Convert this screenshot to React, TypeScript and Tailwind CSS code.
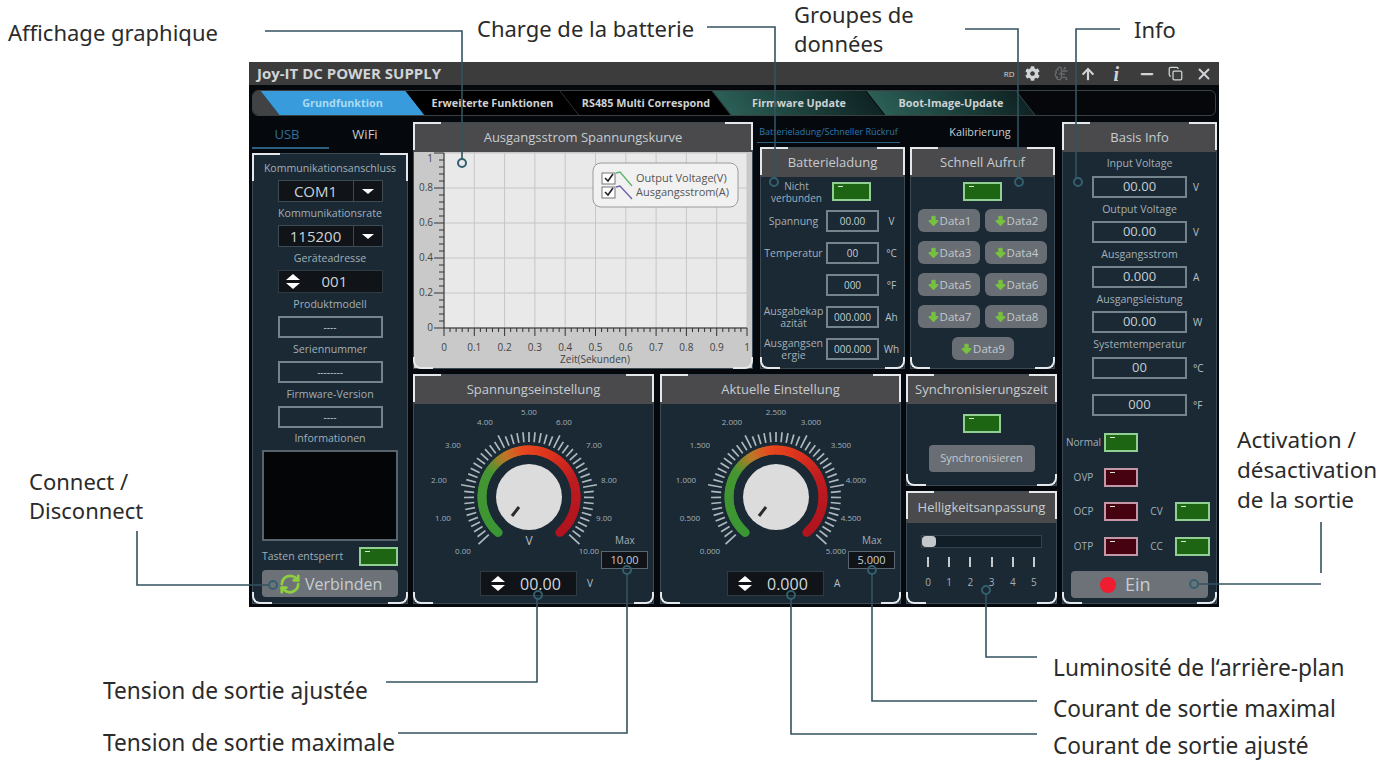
import type { ReactNode } from 'react';
import { ArrowBigDown, BrainCircuit, Copy, Minus, RefreshCw, X } from 'lucide-react';
import { FaArrowUp, FaCog } from 'react-icons/fa';

const ARC_STOPS: [number, number[]][] = [
  [-139, [58, 150, 52]],
  [-55, [70, 150, 50]],
  [-28, [190, 120, 40]],
  [-5, [232, 72, 30]],
  [30, [220, 50, 30]],
  [70, [190, 28, 32]],
  [139, [176, 20, 30]],
];

function arcColor(a: number) {
  for (let i = 1; i < ARC_STOPS.length; i++) {
    const [a0, c0] = ARC_STOPS[i - 1];
    const [a1, c1] = ARC_STOPS[i];
    if (a <= a1) {
      const t = (a - a0) / (a1 - a0);
      const c = c0.map((v, k) => Math.round(v + (c1[k] - v) * t));
      return `rgb(${c[0]},${c[1]},${c[2]})`;
    }
  }
  return 'rgb(176,20,30)';
}

function polar(r: number, deg: number, cx = 115, cy = 93) {
  const rad = (deg * Math.PI) / 180;
  return [cx + r * Math.sin(rad), cy - r * Math.cos(rad)];
}

const LABEL_POS = [
  [49, 150],
  [29, 117],
  [25, 79],
  [39, 44],
  [71, 21],
  [115, 11],
  [150, 21],
  [180, 44],
  [195, 79],
  [190, 117],
  [175, 150],
];

function Corners() {
  const c = 'absolute border-[#e4e8ea] pointer-events-none';
  return (
    <>
      <span className={`${c} -left-px -top-px w-7 h-7 border-l-2 border-t-2`} />
      <span className={`${c} -right-px -top-px w-7 h-7 border-r-2 border-t-2`} />
      <span className={`${c} -left-px -bottom-px w-5 h-3 border-l-2 border-b-2 rounded-bl-lg`} />
      <span className={`${c} -right-px -bottom-px w-5 h-3 border-r-2 border-b-2 rounded-br-lg`} />
    </>
  );
}

function Panel({ title, className, headH = 'h-[29px]', children }: { title?: string; className: string; headH?: string; children: ReactNode }) {
  return (
    <div className={`relative flex flex-col bg-[#1a2934] border border-[#3b4a55] ${className}`}>
      {title && (
        <div className={`${headH} shrink-0 flex items-center justify-center bg-[#4a4a4c] text-[13px] text-[#c6ccd0] whitespace-nowrap`}>
          {title}
        </div>
      )}
      {children}
      <Corners />
    </div>
  );
}

function Field({ value, className = '' }: { value: string; className?: string }) {
  return (
    <div className={`h-[22px] flex items-center justify-center border-2 border-[#75838d] text-[#c6ced3] ${className}`}>
      {value}
    </div>
  );
}

function Led({ red, className = '' }: { red?: boolean; className?: string }) {
  return (
    <div className={`relative h-[19px] border-2 ${red ? 'bg-[#470212] border-[#c596a6]' : 'bg-[#1d6512] border-[#92cf92]'} ${className}`}>
      <span className="absolute left-[4px] top-[2px] w-[5px] h-px bg-[#d8e8d8]" />
    </div>
  );
}

function Combo({ value }: { value: string }) {
  return (
    <div className="h-[22px] w-[105px] flex items-center bg-[#101317] border border-[#3e4a53] text-[15px] text-[#ccd2d6]">
      <span className="flex-1 text-center">{value}</span>
      <span className="w-[29px] h-full flex items-center justify-center border-l border-[#3e4a53]">
        <span className="w-0 h-0 border-x-[6px] border-x-transparent border-t-[5px] border-t-white" />
      </span>
    </div>
  );
}

function UpDown() {
  return (
    <span className="flex flex-col gap-[3px] items-center">
      <span className="w-0 h-0 border-x-[7px] border-x-transparent border-b-[6px] border-b-white" />
      <span className="w-0 h-0 border-x-[7px] border-x-transparent border-t-[6px] border-t-white" />
    </span>
  );
}

function Lbl({ children, h = 'h-[23px]' }: { children: ReactNode; h?: string }) {
  return <div className={`${h} flex items-center justify-center text-[10.6px] text-[#a3afb7] whitespace-nowrap`}>{children}</div>;
}

function LeftPanel() {
  return (
    <div className="w-[156px] flex flex-col">
      <div className="h-[25px] flex items-center text-[13px]">
        <span className="w-[70px] text-center text-[#2f6f9a]">USB</span>
        <span className="w-[86px] text-center text-[#c8ced2]">WiFi</span>
      </div>
      <div className="h-[2px] w-[77px] bg-[#2a5f80]" />
      <Panel className="mt-[4px] flex-1 items-center pt-[3px]">
        <Lbl>Kommunikationsanschluss</Lbl>
        <Combo value="COM1" />
        <Lbl>Kommunikationsrate</Lbl>
        <Combo value="115200" />
        <Lbl>Geräteadresse</Lbl>
        <div className="h-[23px] w-[105px] flex items-center bg-[#101317] border border-[#2f3a42] pl-[7px]">
          <UpDown />
          <span className="ml-[22px] text-[15px] text-[#ccd2d6]">001</span>
        </div>
        <Lbl>Produktmodell</Lbl>
        <Field value="----" className="w-[105px] text-[10px]" />
        <Lbl>Seriennummer</Lbl>
        <Field value="--------" className="w-[105px] text-[10px]" />
        <Lbl>Firmware-Version</Lbl>
        <Field value="----" className="w-[105px] text-[10px]" />
        <Lbl h="h-[22px]">Informationen</Lbl>
        <div className="w-[136px] h-[91px] bg-[#030507] border-2 border-[#57646e]" />
        <div className="mt-[6px] w-[136px] flex items-center justify-between text-[10.5px] text-[#a3afb7]">
          <span>Tasten entsperrt</span>
          <Led className="w-[39px]" />
        </div>
        <div className="mt-[4px] w-[136px] h-[27px] rounded bg-[#6c7277] flex items-center pl-[17px] text-[16px] text-[#c7cdd2]">
          <RefreshCw size={22} strokeWidth={3} className="text-[#8fcf3f]" />
          <span className="ml-[4px]">Verbinden</span>
        </div>
      </Panel>
    </div>
  );
}

function Chart() {
  const xs = Array.from({ length: 11 }, (_, i) => 30 + i * 30.3);
  const ys = [1, 36, 71, 106, 141, 176];
  const minorX = Array.from({ length: 51 }, (_, i) => 30 + i * 6.06);
  const minorY = Array.from({ length: 26 }, (_, i) => 1 + i * 7);
  return (
    <svg width={338} height={217} className="block">
      <rect width={338} height={217} fill="#c9c9c9" />
      <rect x={30} y={1} width={303} height={175} fill="#e9e9e9" />
      {xs.map((x) => (
        <line key={x} x1={x} x2={x} y1={1} y2={176} stroke="#c6c6c6" />
      ))}
      {ys.map((y) => (
        <line key={y} x1={30} x2={333} y1={y} y2={y} stroke="#c6c6c6" />
      ))}
      <line x1={30} x2={30} y1={1} y2={176} stroke="#222" />
      <line x1={30} x2={333} y1={176} y2={176} stroke="#222" />
      {minorX.map((x, i) => (
        <line key={x} x1={x} x2={x} y1={176} y2={i % 5 === 0 ? 184 : 180} stroke="#333" />
      ))}
      {minorY.map((y, i) => (
        <line key={y} x1={30} x2={i % 5 === 0 ? 20 : 25} y1={y} y2={y} stroke="#333" />
      ))}
      {['1', '0.8', '0.6', '0.4', '0.2', '0'].map((t, i) => (
        <text key={t} x={19} y={i === 0 ? 10 : ys[i] + 3} textAnchor="end" fontSize={10} fill="#444">
          {t}
        </text>
      ))}
      {['0', '0.1', '0.2', '0.3', '0.4', '0.5', '0.6', '0.7', '0.8', '0.9', '1'].map((t, i) => (
        <text key={t} x={xs[i]} y={199} textAnchor="middle" fontSize={10} fill="#444">
          {t}
        </text>
      ))}
      <text x={181} y={211} textAnchor="middle" fontSize={10} fill="#444">
        Zeit(Sekunden)
      </text>
      <rect x={179} y={11} width={145} height={44} rx={8} fill="#f1f1f1" stroke="#9a9a9a" />
      <rect x={188} y={21} width={13} height={11} fill="#fff" stroke="#777" />
      <rect x={188} y={35} width={13} height={11} fill="#fff" stroke="#777" />
      <path d="M191 26l3 3 5-7M191 40l3 3 5-7" fill="none" stroke="#222" strokeWidth={1.6} />
      <path d="M202 21l4-1 12 14" fill="none" stroke="#5fb56f" strokeWidth={1.4} />
      <path d="M202 35l4-1 12 13" fill="none" stroke="#6a66a8" strokeWidth={1.4} />
      <text x={222} y={30} fontSize={11} fill="#555">
        Output Voltage(V)
      </text>
      <text x={222} y={44} fontSize={11} fill="#555">
        Ausgangsstrom(A)
      </text>
    </svg>
  );
}

function Dial({ labels, unit }: { labels: string[]; unit?: string }) {
  const ticks = Array.from({ length: 51 }, (_, i) => i);
  const segs = Array.from({ length: 70 }, (_, i) => -139 + i * 4);
  return (
    <svg width={239} height={165} className="block">
      {ticks.map((i) => {
        const a = -133 + i * 5.32;
        const major = i % 10 === 0;
        const [x1, y1] = polar(55, a);
        const [x2, y2] = polar(major ? 69 : 65, a);
        return <line key={i} x1={x1} y1={y1} x2={x2} y2={y2} stroke="#aeb8bf" strokeWidth={1.7} />;
      })}
      {segs.map((a) => {
        const [x1, y1] = polar(47, a);
        const [x2, y2] = polar(47, Math.min(a + 4, 139));
        return <line key={a} x1={x1} y1={y1} x2={x2} y2={y2} stroke={arcColor(a)} strokeWidth={9} strokeLinecap="round" />;
      })}
      <circle cx={115} cy={93} r={33} fill="#dcdcdc" />
      <line x1={98} y1={112} x2={105} y2={103} stroke="#2a2a2a" strokeWidth={3} />
      {labels.map((t, i) => (
        <text key={t} x={LABEL_POS[i][0]} y={LABEL_POS[i][1]} textAnchor="middle" fontSize={8} fill="#a3afb7">
          {t}
        </text>
      ))}
      {unit && (
        <text x={115} y={141} textAnchor="middle" fontSize={12} fill="#b6c0c7">
          {unit}
        </text>
      )}
    </svg>
  );
}

function DialPanel({ title, labels, value, unit, max, dialUnit }: { title: string; labels: string[]; value: string; unit: string; max: string; dialUnit?: string }) {
  return (
    <Panel title={title} className="w-[241px]">
      <div className="relative flex-1">
        <Dial labels={labels} unit={dialUnit} />
        <span className="absolute left-[201px] top-[129px] text-[10px] text-[#a3afb7]">Max</span>
        <div className="absolute left-[187px] top-[147px] w-[47px] h-[18px] flex items-center justify-center bg-[#101317] border border-[#59666f] text-[11px] text-[#c6ced3]">
          {max}
        </div>
        <div className="flex items-center ml-[66px] mt-[2px]">
          <div className="w-[97px] h-[25px] flex items-center bg-[#101317] border border-[#2f3a42] pl-[10px]">
            <UpDown />
            <span className="ml-[15px] text-[16px] text-[#d2d8dc]">{value}</span>
          </div>
          <span className="ml-[10px] text-[10px] text-[#b6c0c7]">{unit}</span>
        </div>
      </div>
    </Panel>
  );
}

function BatRow({ label, value, unit }: { label: ReactNode; value: string; unit: string }) {
  return (
    <div className="flex items-center h-[22px] mt-[10px] first:mt-0">
      <span className="w-[65px] text-center text-[10.5px] leading-[12px] text-[#a3afb7] whitespace-nowrap">{label}</span>
      <Field value={value} className="w-[53px] text-[10px]" />
      <span className="w-[25px] text-center text-[10px] text-[#b6c0c7]">{unit}</span>
    </div>
  );
}

function DataBtn({ n }: { n: number }) {
  return (
    <div className="w-[62px] h-[23px] rounded-md bg-[#686e74] flex items-center justify-center text-[11.5px] text-[#c3c9cd]">
      <ArrowBigDown size={13} className="text-[#78c040] fill-[#78c040]" />
      <span>Data{n}</span>
    </div>
  );
}

function BatteryPanel() {
  return (
    <Panel title="Batterieladung" className="w-[145px] h-[222px]">
      <div className="flex items-center h-[19px] mt-[5px]">
        <span className="w-[71px] text-center text-[10px] leading-[12px] text-[#a3afb7]">
          Nicht
          <br />
          verbunden
        </span>
        <Led className="w-[39px]" />
      </div>
      <div className="mt-[9px]">
        <BatRow label="Spannung" value="00.00" unit="V" />
        <BatRow label="Temperatur" value="00" unit="°C" />
        <BatRow label="" value="000" unit="°F" />
        <BatRow
          label={
            <>
              Ausgabekap
              <br />
              azität
            </>
          }
          value="000.000"
          unit="Ah"
        />
        <BatRow
          label={
            <>
              Ausgangsen
              <br />
              ergie
            </>
          }
          value="000.000"
          unit="Wh"
        />
      </div>
    </Panel>
  );
}

function QuickPanel() {
  return (
    <Panel title="Schnell Aufruf" className="w-[145px] h-[222px] items-stretch">
      <div className="flex justify-center mt-[5px]">
        <Led className="w-[39px]" />
      </div>
      <div className="mt-[8px] grid grid-cols-[62px_62px] justify-center gap-x-[5px] gap-y-[9px]">
        {[1, 2, 3, 4, 5, 6, 7, 8].map((n) => (
          <DataBtn key={n} n={n} />
        ))}
      </div>
      <div className="flex justify-center mt-[9px]">
        <DataBtn n={9} />
      </div>
    </Panel>
  );
}

function InfoRow({ value, unit, className = '' }: { value: string; unit: string; className?: string }) {
  return (
    <div className={`flex items-center pl-[29px] ${className}`}>
      <Field value={value} className="w-[95px] text-[13px]" />
      <span className="ml-[6px] text-[10px] text-[#b6c0c7]">{unit}</span>
    </div>
  );
}

function StatusRow({ a, b, red, className = '' }: { a: string; b?: string; red?: boolean; className?: string }) {
  return (
    <div className={`flex items-center text-[10px] text-[#a3afb7] ${className}`}>
      <span className="w-[41px] text-center">{a}</span>
      <Led red={red} className="w-[34px]" />
      {b && <span className="w-[37px] text-center">{b}</span>}
      {b && <Led className="w-[35px]" />}
    </div>
  );
}

function InfoPanel() {
  return (
    <Panel title="Basis Info" className="w-[155px]">
      <Lbl h="h-[24px]">Input Voltage</Lbl>
      <InfoRow value="00.00" unit="V" />
      <Lbl>Output Voltage</Lbl>
      <InfoRow value="00.00" unit="V" />
      <Lbl>Ausgangsstrom</Lbl>
      <InfoRow value="0.000" unit="A" />
      <Lbl>Ausgangsleistung</Lbl>
      <InfoRow value="00.00" unit="W" />
      <Lbl h="h-[24px]">Systemtemperatur</Lbl>
      <InfoRow value="00" unit="°C" />
      <InfoRow value="000" unit="°F" className="mt-[15px]" />
      <StatusRow a="Normal" className="mt-[17px]" />
      <StatusRow a="OVP" red className="mt-[16px]" />
      <StatusRow a="OCP" b="CV" red className="mt-[15px]" />
      <StatusRow a="OTP" b="CC" red className="mt-[16px]" />
      <div className="mt-[15px] ml-[8px] w-[137px] h-[27px] rounded bg-[#6c7277] flex items-center pl-[29px] text-[18px] text-[#c7cdd2]">
        <span className="w-[16px] h-[16px] rounded-full bg-[#f01c30]" />
        <span className="ml-[9px]">Ein</span>
      </div>
    </Panel>
  );
}

const TABS = [
  { t: 'Grundfunktion', w: 'w-[145px]', bg: 'bg-[#389bdb]', c: 'text-[#a9dcf5]' },
  { t: 'Erweiterte Funktionen', w: 'w-[155px]', bg: 'bg-black border-r border-[#3a3f42]', c: 'text-[#cdd2d5]' },
  { t: 'RS485 Multi Correspond', w: 'w-[152px]', bg: 'bg-black border-r border-[#3a3f42]', c: 'text-[#cdd2d5]' },
  { t: 'Firmware Update', w: 'w-[154px]', bg: 'bg-gradient-to-r from-[#2b5f56] to-[#0f2424] border-r border-[#070a0a]', c: 'text-[#cdd2d5]' },
  { t: 'Boot-Image-Update', w: 'w-[150px]', bg: 'bg-gradient-to-r from-[#2b5f56] to-[#0f2424] border-r border-[#3a4f4c]', c: 'text-[#cdd2d5]' },
];

function TabBar() {
  return (
    <div className="mt-[5px] mx-[3px] h-[26px] flex bg-[#05070a] border border-[#3a3f42] rounded-md overflow-hidden">
      <div className="relative w-[17px] shrink-0">
        <span className="absolute inset-y-0 -left-4 right-0 bg-[#404244] skew-x-[38deg]" />
      </div>
      {TABS.map((tab) => (
        <div key={tab.t} className={`relative ${tab.w} shrink-0 flex items-center justify-center`}>
          <span className={`absolute inset-0 skew-x-[38deg] ${tab.bg}`} />
          <span className={`relative text-[10.8px] font-bold whitespace-nowrap ${tab.c}`}>{tab.t}</span>
        </div>
      ))}
    </div>
  );
}

function TitleBar() {
  return (
    <div className="h-[23px] shrink-0 bg-[#3c3c3d] flex items-center pl-[8px] pr-[6px] text-[#d0d4d6]">
      <span className="text-[15px] font-bold whitespace-nowrap">Joy-IT DC POWER SUPPLY</span>
      <div className="ml-auto flex items-center">
        <span className="text-[8px] mr-[11px]">RD</span>
        <FaCog size={15} className="mr-[14px]" />
        <BrainCircuit size={15} className="mr-[12px] text-[#666a6c]" />
        <FaArrowUp size={14} className="mr-[18px]" />
        <span className="font-['Liberation_Serif',serif] italic font-bold text-[20px] leading-none mr-[19px]">i</span>
        <Minus size={18} strokeWidth={3} className="mr-[12px]" />
        <Copy size={15} className="mr-[12px]" />
        <X size={18} strokeWidth={2.5} />
      </div>
    </div>
  );
}

function Window() {
  return (
    <div className="ml-[249px] w-[970px] h-[545px] flex flex-col bg-[#05090d] font-['Open_Sans',sans-serif]">
      <TitleBar />
      <TabBar />
      <div className="mt-[6px] ml-[3px] flex gap-[5px] h-[482px]">
        <LeftPanel />
        <div className="w-[644px] flex flex-col gap-[5px]">
          <div className="flex h-[247px]">
            <Panel title="Ausgangsstrom Spannungskurve" className="w-[340px]">
              <Chart />
            </Panel>
            <div className="ml-[4px] flex-1 flex flex-col">
              <div className="h-[20px] flex items-center">
                <span className="w-[143px] text-center text-[9px] text-[#2f78b0] whitespace-nowrap">Batterieladung/Schneller Rückruf</span>
                <span className="w-[160px] text-center text-[10.8px] text-[#c8ced2]">Kalibrierung</span>
              </div>
              <div className="h-[1px] w-[143px] bg-[#2a5f80]" />
              <div className="mt-[4px] ml-[3px] flex gap-[5px]">
                <BatteryPanel />
                <QuickPanel />
              </div>
            </div>
          </div>
          <div className="flex h-[230px]">
            <DialPanel
              title="Spannungseinstellung"
              labels={['0.00', '1.00', '2.00', '3.00', '4.00', '5.00', '6.00', '7.00', '8.00', '9.00', '10.00']}
              value="00.00"
              unit="V"
              max="10.00"
              dialUnit="V"
            />
            <div className="w-[6px]" />
            <DialPanel
              title="Aktuelle Einstellung"
              labels={['0.000', '0.500', '1.000', '1.500', '2.000', '2.500', '3.000', '3.500', '4.000', '4.500', '5.000']}
              value="0.000"
              unit="A"
              max="5.000"
            />
            <div className="ml-[5px] w-[151px] flex flex-col gap-[5px]">
              <Panel title="Synchronisierungszeit" className="h-[112px] items-stretch">
                <div className="flex justify-center mt-[10px]">
                  <Led className="w-[38px]" />
                </div>
                <div className="mt-[12px] mx-auto w-[106px] h-[27px] rounded bg-[#686e74] flex items-center justify-center text-[11px] text-[#c3c9cd]">
                  Synchronisieren
                </div>
              </Panel>
              <Panel title="Helligkeitsanpassung" headH="h-[31px]" className="flex-1">
                <div className="relative mt-[12px] mx-[14px] h-[13px] bg-[#121e27] border border-[#33424d]">
                  <span className="absolute left-0 top-0 w-[14px] h-full rounded bg-[#c4c8cc]" />
                </div>
                <div className="mt-[9px] ml-[18px] w-[112px] flex justify-between">
                  {[0, 1, 2, 3, 4, 5].map((n) => (
                    <div key={n} className="w-[6px] flex flex-col items-center text-[10px] text-[#a3afb7]">
                      <span className="w-[2px] h-[10px] bg-[#c4cacd]" />
                      <span className="mt-[8px]">{n}</span>
                    </div>
                  ))}
                </div>
              </Panel>
            </div>
          </div>
        </div>
        <InfoPanel />
      </div>
    </div>
  );
}

const CALLOUTS = [
  'M265 31H462V159',
  'M707 27H775V178',
  'M965 29H1018V178',
  'M1120 29H1076V178',
  'M137 531V585H269',
  'M1321 522V573',
  'M1321 584H1198',
  'M386 682H537V599',
  'M398 733H627V574',
  'M1037 657H986V594',
  'M1037 701H872V574',
  'M1037 734H791V599',
];

const DOTS = [
  [462, 163],
  [774, 182],
  [1019, 182],
  [1078, 182],
  [273, 585],
  [1194, 584],
  [538, 595],
  [627, 570],
  [986, 590],
  [872, 570],
  [791, 595],
];

function Note({ className, children }: { className: string; children: ReactNode }) {
  return <div className={`absolute text-[#2b2b2b] whitespace-nowrap ${className}`}>{children}</div>;
}

export default function App() {
  return (
    <div className="relative w-[1390px] h-[762px] bg-white overflow-hidden pt-[62px] font-['Noto_Sans',sans-serif]">
      <Window />
      <svg width={1390} height={762} className="absolute inset-0 pointer-events-none">
        {CALLOUTS.map((d) => (
          <path key={d} d={d} fill="none" stroke="#33535f" strokeWidth={1.6} />
        ))}
        {DOTS.map(([x, y]) => (
          <circle key={`${x}-${y}`} cx={x} cy={y} r={4} fill="none" stroke="#33606f" strokeWidth={2} />
        ))}
      </svg>
      <Note className="left-[8px] top-[18px] text-[22px] leading-[29px]">Affichage graphique</Note>
      <Note className="left-[477px] top-[14px] text-[22px] leading-[29px]">Charge de la batterie</Note>
      <Note className="left-[794px] top-0 text-[22px] leading-[29px]">
        Groupes de
        <br />
        données
      </Note>
      <Note className="left-[1134px] top-[15px] text-[22px] leading-[29px]">Info</Note>
      <Note className="left-[29px] top-[467px] text-[22px] leading-[29px]">
        Connect /
        <br />
        Disconnect
      </Note>
      <Note className="left-[1237px] top-[425px] text-[22.5px] leading-[30px]">
        Activation /
        <br />
        désactivation
        <br />
        de la sortie
      </Note>
      <Note className="left-[103px] top-[676px] text-[22.7px] leading-[29px]">Tension de sortie ajustée</Note>
      <Note className="left-[103px] top-[728px] text-[22.7px] leading-[29px]">Tension de sortie maximale</Note>
      <Note className="left-[1053px] top-[653px] text-[22.7px] leading-[29px]">Luminosité de l‘arrière-plan</Note>
      <Note className="left-[1053px] top-[694px] text-[22.7px] leading-[29px]">Courant de sortie maximal</Note>
      <Note className="left-[1053px] top-[733px] text-[22.7px] leading-[26px]">Courant de sortie ajusté</Note>
    </div>
  );
}
